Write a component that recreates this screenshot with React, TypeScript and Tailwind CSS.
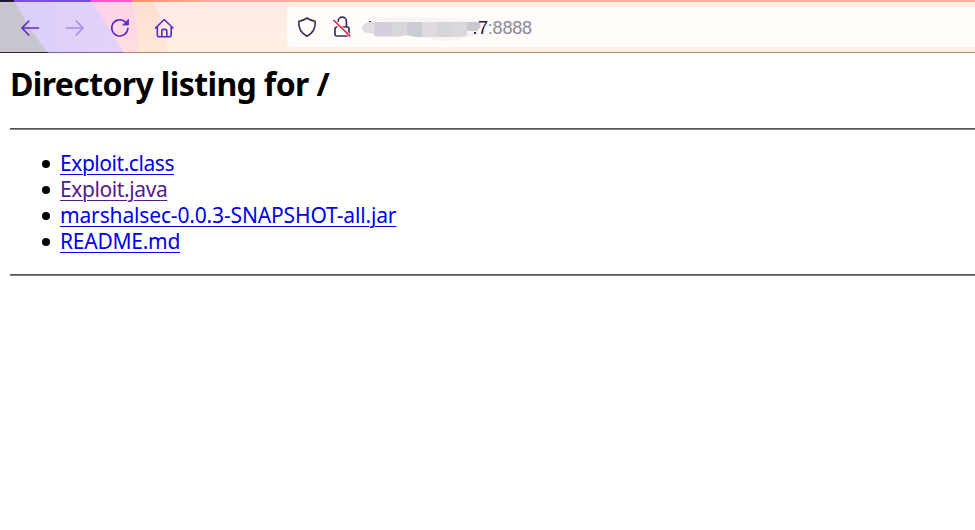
import React from "react";

const files = [
  { name: "Exploit.class", style: "text-[#0000ee] tracking-[-0.45px]" },
  { name: "Exploit.java", style: "text-[#551a8b] tracking-[-0.4px]" },
  { name: "marshalsec-0.0.3-SNAPSHOT-all.jar", style: "text-[#0000ee] tracking-[-0.15px]" },
  { name: "README.md", style: "text-[#0000ee] tracking-[-0.25px]" },
];

function ThemeArt() {
  return (
    <svg className="absolute inset-0 h-[53px] w-full" width="975" height="53" aria-hidden="true">
      <defs>
        <linearGradient id="peach" x1="0" y1="0" x2="0" y2="1">
          <stop offset="0" stopColor="#ffe9e5" />
          <stop offset="1" stopColor="#fff1e3" />
        </linearGradient>
        <linearGradient id="lilac" x1="0" y1="0" x2="1" y2="0">
          <stop offset="0" stopColor="#dacff8" />
          <stop offset="1" stopColor="#e4d2f8" />
        </linearGradient>
        <linearGradient id="pink" x1="0" y1="0" x2="0.5" y2="1">
          <stop offset="0" stopColor="#ffd0ee" />
          <stop offset="1" stopColor="#ffdcdf" />
        </linearGradient>
        <linearGradient id="orange" x1="0" y1="0" x2="0" y2="1">
          <stop offset="0" stopColor="#ffe0d2" />
          <stop offset="1" stopColor="#ffe7d6" />
        </linearGradient>
        <linearGradient id="strip" x1="0" y1="0" x2="1" y2="0">
          <stop offset="0" stopColor="#ff9068" />
          <stop offset="0.1" stopColor="#ffb09c" />
          <stop offset="1" stopColor="#ffb09e" />
        </linearGradient>
      </defs>
      <rect width="975" height="53" fill="url(#peach)" />
      <path d="M130 2H152Q165 20 168 53H130Z" fill="url(#orange)" />
      <path d="M90 2H132Q139 25 138 53H90Z" fill="url(#pink)" />
      <path d="M14 2H92Q110 28 124 53H14Z" fill="url(#lilac)" />
      <path d="M0 2H15Q28 28 48 53H0Z" fill="#c8c5cf" />
      <rect x="132" width="843" height="2" fill="url(#strip)" />
      <rect x="91" width="41" height="2" fill="#ff57c8" />
      <rect x="14" width="77" height="2" fill="#7950dc" />
      <rect width="14" height="2" fill="#241638" />
      <rect y="52" width="975" height="1" fill="#b58c7b" />
      <rect y="52" x="48" width="76" height="1" fill="#81629f" />
      <rect y="52" width="48" height="1" fill="#35213e" />
    </svg>
  );
}

function NavIcons() {
  return (
    <div className="relative flex h-[53px] w-[287px] items-center pl-5 pt-[2px]">
      <svg width="160" height="24" viewBox="0 0 160 24" fill="none" stroke="#592acb" strokeWidth="1.6" strokeLinecap="round" strokeLinejoin="round">
        <path d="M18.5 12H2M8.8 5L2 12L8.8 19" />
        <path d="M46.5 12H63M56.2 5L63 12L56.2 19" opacity=".42" />
        <path d="M107.9 12.2A8.1 8.1 0 1 1 105.3 5.9" />
        <path d="M108.5 3.5V9H103Z" fill="#592acb" strokeWidth=".8" />
        <path d="M135.5 12L144.2 3.5L153 12M137.3 10.8V18.7Q137.3 20.7 139.1 20.7H149.4Q151.2 20.7 151.2 18.7V10.8M141.8 20.5V15.4Q141.8 13.4 143.4 13.4H145.2Q146.8 13.4 146.8 15.4V20.5" />
      </svg>
    </div>
  );
}

function AddressBar() {
  return (
    <div className="relative mt-[7px] flex h-10 flex-1 items-center rounded-l-[5px] bg-[#fffcf9]">
      <svg width="201" height="40" viewBox="0 0 201 40" fill="none" className="shrink-0">
        <path d="M20 11Q24 14 28.2 14.3Q29 24.5 20 29.2Q11 24.5 11.8 14.3Q16 14 20 11Z" stroke="#3b2e58" strokeWidth="1.6" strokeLinejoin="round" />
        <path d="M51.2 14.2A4.1 4.1 0 0 1 59.4 14.2V20M49.8 20Q48 20 48 21.8V27.4Q48 29 49.6 29H60.4Q62 29 62 27.4V21.8Q62 20 60.4 20H54.5" stroke="#3b2e58" strokeWidth="1.7" strokeLinecap="round" />
        <path d="M46.5 13L63.3 29.3" stroke="#fffcf9" strokeWidth="3" />
        <path d="M46.5 13L63.3 29.3" stroke="#f31d50" strokeWidth="1.7" />
        <rect x="82" y="14" width="2" height="2" fill="#40345b" />
        <path d="M86 9Q100 12 120 10Q150 10 174 12L192 15V28L174 32Q158 37 135 30L85 26Z" fill="#f9f4f2" />
        <path d="M88 15V29Q86 26 82 26C77 26 75 23 75 20.5S79 15 83 15Z" fill="#e0dcdf" />
        <path d="M88 15H105V29.5H88Z" fill="#d3ced7" />
        <path d="M105 15H120V28L112 29.5H105Z" fill="#d9d5dc" />
        <path d="M120 15H135V30H128L120 28Z" fill="#cccad3" />
        <path d="M135 15H150V30H135Z" fill="#dedae0" />
        <path d="M150 15H165V30H150Z" fill="#d6d3d9" />
        <path d="M165 15H180V28Q178 30 165 30Z" fill="#dad7dd" />
        <path d="M180 15H193Q195 20 190 24H180Z" fill="#cac7d1" />
        <rect x="187" y="25" width="2" height="2" fill="#30264b" />
      </svg>
      <span className="-ml-[10px] whitespace-nowrap pt-[1px] font-['Liberation_Sans',Arial,sans-serif] text-[18px] leading-[22px] tracking-[-0.2px] text-[#8f879d]">
        <span className="text-[#24183e]">7</span>:8888
      </span>
    </div>
  );
}

export default function App() {
  return (
    <div className="h-[530px] w-full overflow-hidden bg-white font-['Noto_Sans','Open_Sans',sans-serif] text-black">
      <header className="relative flex h-[53px]">
        <ThemeArt />
        <NavIcons />
        <AddressBar />
      </header>
      <main className="pl-[10px]">
        <h1 className="h-[75px] whitespace-nowrap pt-[9px] text-[32px] font-bold leading-[44px] tracking-[-0.62px]">
          <span>Directory listing for /</span>
        </h1>
        <hr className="h-[2px] border-0 border-t border-[#555555] bg-[#858585]" />
        <ul className="h-[144px] list-none pt-[21px]">
          {files.map((file) => (
            <li key={file.name} className="flex h-[26px] items-center whitespace-nowrap pl-8 text-[21px] leading-[26px]">
              <span className="mr-[10px] size-2 shrink-0 rounded-full bg-black" />
              <a href="#" className={`-mt-[2px] underline decoration-1 underline-offset-[3px] [text-decoration-skip-ink:auto] ${file.style}`}>{file.name}</a>
            </li>
          ))}
        </ul>
        <hr className="h-[2px] border-0 border-t border-[#555555] bg-[#858585]" />
      </main>
    </div>
  );
}
